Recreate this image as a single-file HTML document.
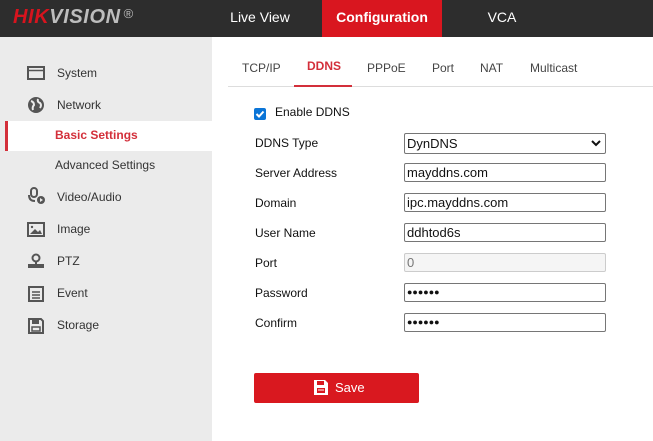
<!DOCTYPE html>
<html><head><style>
*{margin:0;padding:0;box-sizing:border-box}
body{width:653px;height:441px;overflow:hidden;font-family:"Liberation Sans",Arial,sans-serif;font-size:12px;color:#222;background:#fff;position:relative}
.hdr{position:absolute;left:0;top:0;width:653px;height:37px;background:#2d2d2d}
.logo{position:absolute;left:13px;top:6px;font-size:20px;font-weight:bold;font-style:italic;letter-spacing:0.6px}
.nav{position:absolute;top:0;height:37px;line-height:35px;color:#fff;font-size:14px;text-align:center}
.side{position:absolute;left:0;top:37px;width:212px;height:404px;background:#ebebeb}
.si{position:absolute;left:57px;font-size:12px;color:#333}
.ic{position:absolute;left:27px}
.tab{position:absolute;top:61px;font-size:12px;color:#444}
.lbl{position:absolute;left:255px;font-size:12px;color:#111}
.inp{position:absolute;left:404px;width:202px;height:19px;border:1px solid #767676;border-radius:2px;padding-left:2px;font-size:13px;line-height:17px;color:#111}
</style></head><body>
<div class="hdr">
<div class="logo"><span style="color:#d7141e">HIK</span><span style="color:#bdbdbd">VISION</span><span style="color:#bdbdbd;font-style:normal;font-weight:normal;font-size:13px;vertical-align:top;margin-left:3px">®</span></div>
<div class="nav" style="left:200px;width:120px">Live View</div>
<div class="nav" style="left:322px;width:120px;background:#d9161f;font-weight:bold">Configuration</div>
<div class="nav" style="left:442px;width:120px">VCA</div>
</div>
<div class="side">
<div style="position:absolute;left:5px;top:84px;width:207px;height:30px;background:#fff;border-left:3px solid #d32f3a"></div>
</div>
<svg class="ic" style="top:66px" width="18" height="14"><rect x="1" y="1" width="16" height="12" fill="none" stroke="#555" stroke-width="2"/><line x1="1" y1="4.5" x2="17" y2="4.5" stroke="#555" stroke-width="1.5"/></svg>
<div class="si" style="top:66px">System</div>
<svg class="ic" style="top:96px" width="18" height="18"><circle cx="9" cy="9" r="8" fill="#555"/><path d="M4 5 Q7 6 7 9 Q5 11 6 14 M11 3 Q10 6 13 7 Q15 9 13 12" stroke="#ebebeb" stroke-width="2" fill="none"/></svg>
<div class="si" style="top:98px">Network</div>
<div class="si" style="top:128px;left:55px;color:#d32f3a;font-weight:bold">Basic Settings</div>
<div class="si" style="top:158px;left:55px">Advanced Settings</div>
<svg class="ic" style="top:187px" width="20" height="18"><rect x="4" y="1" width="6" height="9" rx="3" fill="none" stroke="#555" stroke-width="2"/><path d="M2 8 Q2 14 8 14" stroke="#555" stroke-width="2" fill="none"/><circle cx="14" cy="13" r="4" fill="#555"/><path d="M13 11 L16 13 L13 15Z" fill="#ebebeb"/></svg>
<div class="si" style="top:190px">Video/Audio</div>
<svg class="ic" style="top:222px" width="18" height="15"><rect x="1" y="1" width="16" height="13" fill="none" stroke="#555" stroke-width="2"/><path d="M3 12 L8 7 L11 10 L13 8 L15 12Z" fill="#555"/><circle cx="5" cy="5" r="1.2" fill="#555"/></svg>
<div class="si" style="top:222px">Image</div>
<svg class="ic" style="top:253px" width="18" height="16"><circle cx="9" cy="5" r="3.5" fill="none" stroke="#555" stroke-width="2"/><rect x="8" y="8" width="2" height="3" fill="#555"/><rect x="1" y="11" width="16" height="4" fill="#555"/></svg>
<div class="si" style="top:254px">PTZ</div>
<svg class="ic" style="top:285px" width="18" height="17"><rect x="2" y="2" width="14" height="14" fill="none" stroke="#555" stroke-width="2"/><path d="M5 1v2M8 1v2M11 1v2M14 1v2" stroke="#555"/><path d="M5 7h8M5 10h8M5 13h8" stroke="#555" stroke-width="1.5"/></svg>
<div class="si" style="top:286px">Event</div>
<svg class="ic" style="top:317px" width="18" height="17"><path d="M2 2 H14 L16 4 V16 H2Z" fill="none" stroke="#555" stroke-width="2"/><rect x="5" y="2" width="7" height="5" fill="#555"/><rect x="5" y="10" width="8" height="4" fill="none" stroke="#555" stroke-width="1.5"/></svg>
<div class="si" style="top:318px">Storage</div>

<div style="position:absolute;left:228px;top:86px;width:425px;height:1px;background:#ddd"></div>
<div class="tab" style="left:242px">TCP/IP</div>
<div class="tab" style="left:307px;color:#d32f3a;font-weight:bold;top:59px">DDNS</div>
<div style="position:absolute;left:294px;top:85px;width:58px;height:2px;background:#d32f3a"></div>
<div class="tab" style="left:367px">PPPoE</div>
<div class="tab" style="left:432px">Port</div>
<div class="tab" style="left:480px">NAT</div>
<div class="tab" style="left:530px">Multicast</div>

<div style="position:absolute;left:254px;top:108px;width:12px;height:12px;background:#0b75d7;border-radius:2px"><svg width="12" height="12"><path d="M2.5 6 L5 8.5 L9.5 3.5" stroke="#fff" stroke-width="2" fill="none"/></svg></div>
<div class="lbl" style="left:275px;top:105px">Enable DDNS</div>
<div class="lbl" style="top:136px">DDNS Type</div>
<div class="inp" style="top:133px;height:21px;line-height:19px;font-size:13px">DynDNS<svg style="position:absolute;right:4px;top:6px" width="10" height="7"><path d="M1 1 L5 5 L9 1" stroke="#111" stroke-width="2" fill="none"/></svg></div>
<div class="lbl" style="top:166px">Server Address</div>
<div class="inp" style="top:163px">mayddns.com</div>
<div class="lbl" style="top:196px">Domain</div>
<div class="inp" style="top:193px">ipc.mayddns.com</div>
<div class="lbl" style="top:226px">User Name</div>
<div class="inp" style="top:223px">ddhtod6s</div>
<div class="lbl" style="top:256px">Port</div>
<div class="inp" style="top:253px;background:#f5f5f5;border-color:#ccc;color:#777">0</div>
<div class="lbl" style="top:286px">Password</div>
<div class="inp" style="top:283px;font-size:9px;font-weight:bold">●●●●●●</div>
<div class="lbl" style="top:316px">Confirm</div>
<div class="inp" style="top:313px;font-size:9px;font-weight:bold">●●●●●●</div>

<div style="position:absolute;left:254px;top:373px;width:165px;height:30px;background:#d9181f;border-radius:2px;color:#fff;font-size:13px;line-height:30px">
<svg style="position:absolute;left:60px;top:7px" width="14" height="15"><path d="M0 0 H11 L14 3 V15 H0Z" fill="#fff"/><rect x="3" y="1" width="7" height="4" fill="#d9181f"/><rect x="3" y="8" width="8" height="5" fill="#d9181f"/><path d="M4 10h6" stroke="#fff"/></svg>
<span style="position:absolute;left:81px">Save</span></div>
</body></html>
